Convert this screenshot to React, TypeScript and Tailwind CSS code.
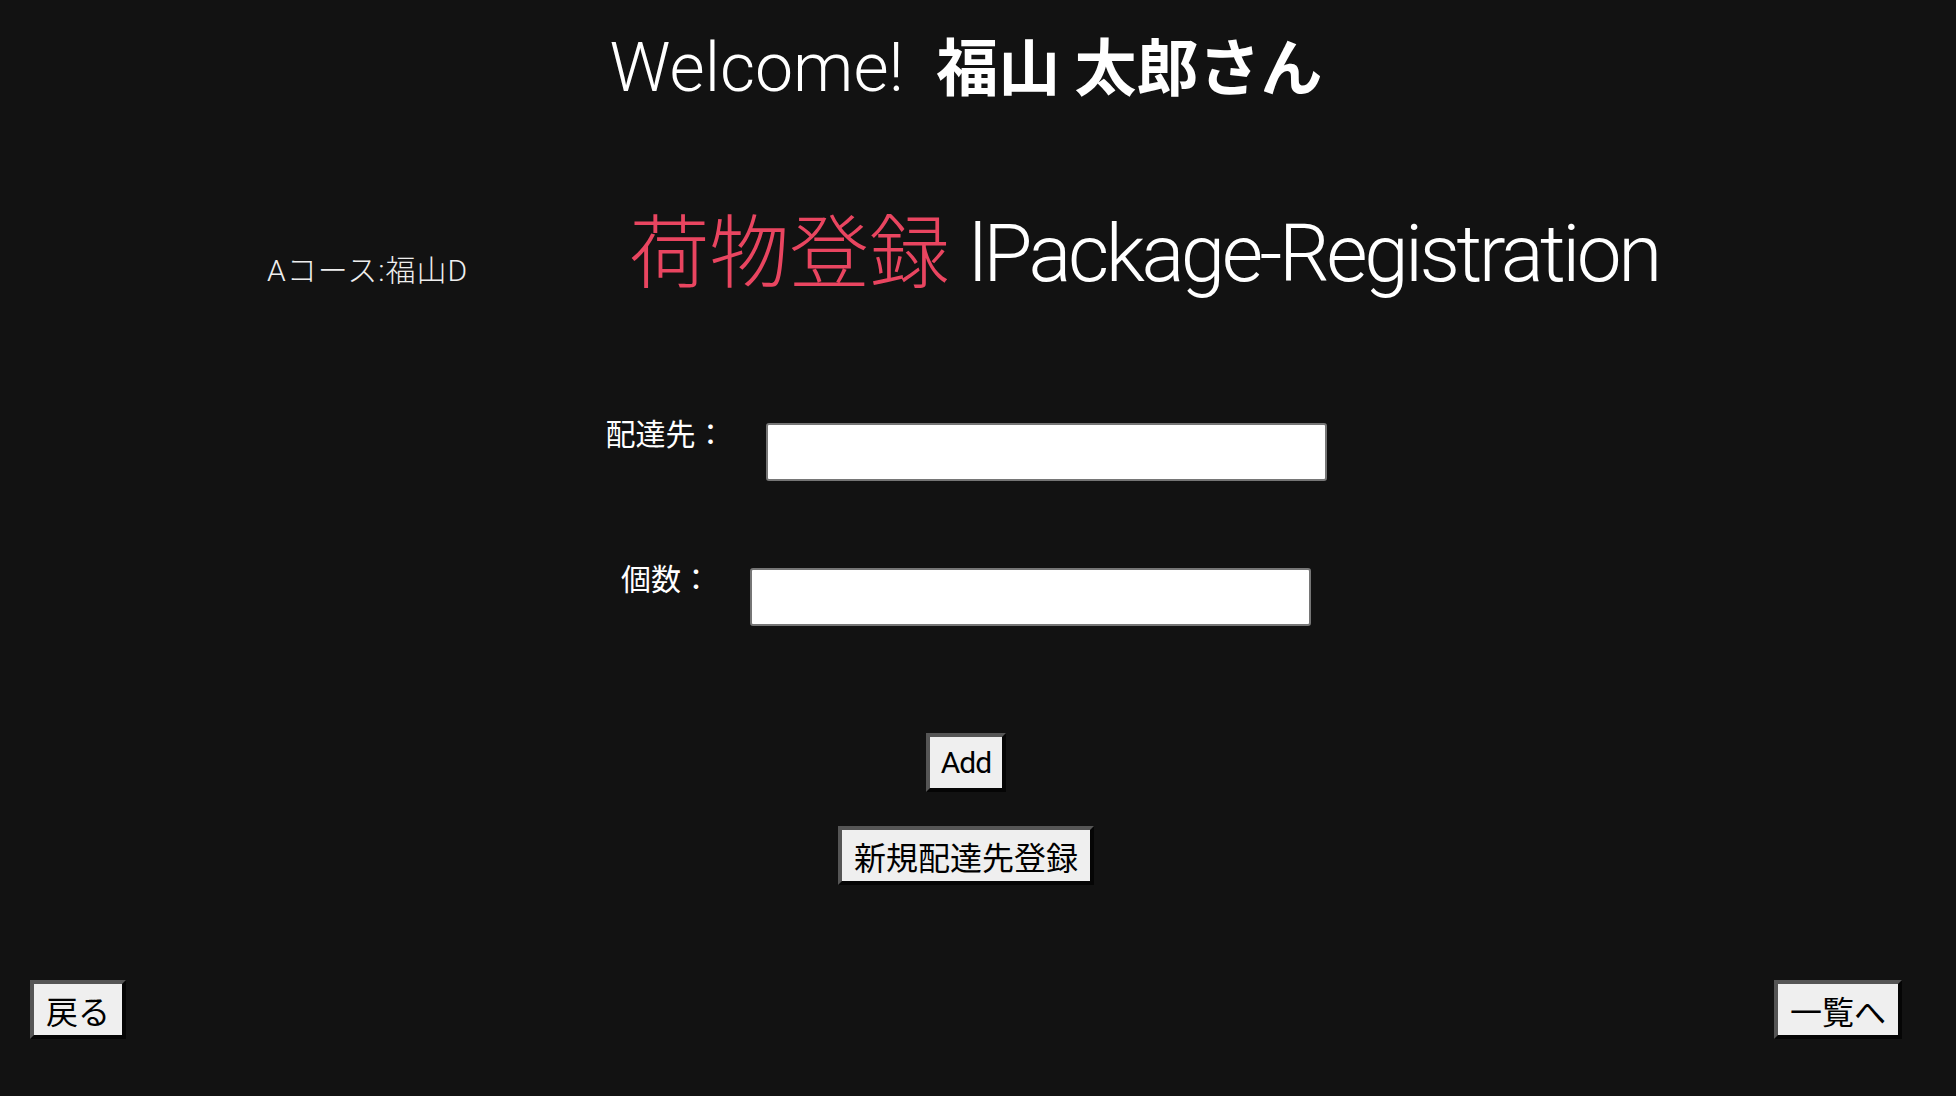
import React from "react"

const latin = "font-['Roboto','Noto_Sans_CJK_JP',sans-serif]"
const cjk = "font-['Noto_Sans_CJK_JP',sans-serif]"

function Btn({ children, className = "" }: { children: React.ReactNode; className?: string }) {
  return (
    <button
      className={`h-[59px] bg-[#efefef] text-black leading-none border-4 border-t-[#555555] border-l-[#555555] border-b-[#050505] border-r-[#050505] ${className}`}
    >
      {children}
    </button>
  )
}

export default function App() {
  return (
    <div className="min-h-screen w-full bg-[#121212] text-white">
      <div className="w-[1932px] flex flex-col">
        {/* header */}
        <h1 className={`pt-[27px] text-center text-[62px] leading-[74px] ${latin}`}>
          <span className="font-light text-[68px]">Welcome!</span>{" "}
          <span className={`ml-[17px] font-bold ${cjk}`}>福山 太郎さん</span>
        </h1>

        {/* course + title */}
        <div className="mt-[91px] flex items-baseline pl-[267px] gap-[161px]">
          <span className={`text-[30px] tracking-[1px] font-light text-[#eeeeee] ${latin}`}>Aコース:福山D</span>
          <h2 className={`text-[80px] leading-[96px] font-light ${latin}`}>
            <span className={`text-[#e94560] ${cjk}`}>荷物登録</span>{" "}
            <span className="tracking-[-3.5px]">lPackage-Registration</span>
          </h2>
        </div>

        {/* form */}
        <div className="mt-[115px] flex flex-col items-center">
          <div className="flex items-start gap-[40px]">
            <label className={`text-[30px] leading-[30px] ${cjk}`}>配達先：</label>
            <input className="mt-[6px] w-[561px] h-[58px] bg-white border-2 border-[#767676] rounded-[3px] text-black px-2 text-[24px]" />
          </div>
          <div className="mt-[81px] flex items-start gap-[39px]">
            <label className={`text-[30px] leading-[30px] ${cjk}`}>個数：</label>
            <input className="mt-[6px] w-[561px] h-[58px] bg-white border-2 border-[#767676] rounded-[3px] text-black px-2 text-[24px]" />
          </div>

          <Btn className={`mt-[107px] w-[80px] text-[30px] tracking-[-1px] ${latin}`}>Add</Btn>
          <Btn className={`mt-[34px] px-[12px] text-[32px] ${cjk}`}>新規配達先登録</Btn>
        </div>

        {/* footer nav */}
        <div className={`mt-[95px] flex justify-between px-[30px] text-[32px] ${cjk}`}>
          <Btn className="px-[12px]">戻る</Btn>
          <Btn className="px-[12px]">一覧へ</Btn>
        </div>
      </div>
    </div>
  )
}
